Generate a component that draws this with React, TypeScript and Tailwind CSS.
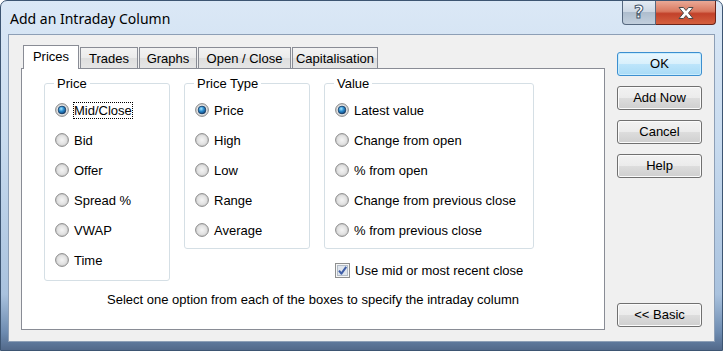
import React from "react";

const Radio = ({ checked }: { checked?: boolean }) => (
  <svg width="14" height="14" viewBox="0 0 14 14" className="shrink-0">
    <defs>
      <radialGradient id="radioBg" cx="50%" cy="50%" r="55%">
        <stop offset="0%" stopColor="#f4f4f4" />
        <stop offset="60%" stopColor="#e2e2e2" />
        <stop offset="100%" stopColor="#c4c4c4" />
      </radialGradient>
      <radialGradient id="radioDot" cx="40%" cy="35%" r="70%">
        <stop offset="0%" stopColor="#a6e6ff" />
        <stop offset="45%" stopColor="#2d8dd0" />
        <stop offset="100%" stopColor="#0b3c72" />
      </radialGradient>
    </defs>
    <circle cx="7" cy="7" r="6.4" fill="url(#radioBg)" stroke="#8c8c8c" strokeWidth="1" />
    {checked && (
      <>
        <circle cx="7" cy="7" r="4.6" fill="#ffffff" />
        <circle cx="7" cy="7" r="3.9" fill="url(#radioDot)" stroke="#1d3a5c" strokeWidth="0.8" />
      </>
    )}
  </svg>
);

const Option = ({ label, checked, focus }: { label: string; checked?: boolean; focus?: boolean }) => (
  <div className="flex h-[30px] items-center gap-[5px]">
    <Radio checked={checked} />
    <span className={focus ? "leading-[15px] outline-1 outline-dotted outline-black" : "leading-[15px]"}>{label}</span>
  </div>
);

const Group = ({ title, options, className }: { title: string; options: string[]; className: string }) => (
  <fieldset className={`rounded-[3px] border border-[#d5dfe5] ${className}`}>
    <legend className="ml-[9px] px-[3px] leading-[15px]">{title}</legend>
    <div className="mt-[4px] flex flex-col pl-[10px]">
      {options.map((o, i) => (
        <Option key={o} label={o} checked={i === 0} focus={o === "Mid/Close"} />
      ))}
    </div>
  </fieldset>
);

const Btn = ({ children, primary }: { children: React.ReactNode; primary?: boolean }) => (
  <button
    className={
      primary
        ? "h-[24px] w-[85px] rounded-[3px] border border-[#3c8fd0] bg-[linear-gradient(to_bottom,#eaf7fe_0%,#d8f0fc_50%,#bde5fb_50%,#a9dbf6_100%)] text-[13px] text-black shadow-[inset_0_0_0_1px_#c8ecfd]"
        : "h-[24px] w-[85px] rounded-[3px] border border-[#707070] bg-[linear-gradient(to_bottom,#f2f2f2_0%,#ebebeb_50%,#dddddd_50%,#cfcfcf_100%)] text-[13px] text-black shadow-[inset_0_0_0_1px_#fbfbfb]"
    }
  >
    {children}
  </button>
);

const tabs = [
  { label: "Prices", cls: "w-[56px]" },
  { label: "Trades", cls: "w-[58px]" },
  { label: "Graphs", cls: "w-[58px]" },
  { label: "Open / Close", cls: "w-[93px]" },
  { label: "Capitalisation", cls: "w-[86px]" },
];

export default function App() {
  return (
    <div className="relative flex h-[351px] w-[723px] flex-col overflow-hidden rounded-t-[7px] border border-[#3d5572] bg-[linear-gradient(to_bottom,#dbe8f6_0%,#c8dbef_40%,#a9c2de_84%,#6d8bb0_95%,#52698a_100%)] font-['Liberation_Sans',Arial,sans-serif] text-[13px] text-black">
      {/* title bar */}
      <div className="flex h-[33px] items-start justify-between pl-[9px] pr-[6px]">
        <span className="mt-[8px] font-['Noto_Sans',sans-serif] text-[14px] leading-[20px] text-black">
          Add an Intraday Column
        </span>
        <div className="flex">
          <div className="flex h-[24px] w-[34px] items-center justify-center rounded-bl-[4px] border border-t-0 border-[#56687f] bg-[linear-gradient(to_bottom,#e4ebf3_0%,#cbd6e3_50%,#aebdce_50%,#c2cfdd_100%)] font-['DejaVu_Sans',sans-serif] text-[17px] font-bold text-white [-webkit-text-stroke:1px_#45566b]">
            ?
          </div>
          <div className="flex h-[24px] w-[60px] items-center justify-center rounded-br-[4px] border border-l-0 border-t-0 border-[#6b2419] bg-[linear-gradient(to_bottom,#eaa996_0%,#d9785f_45%,#c2412a_55%,#d4603f_100%)]">
            <svg width="18" height="14" viewBox="0 0 18 14">
              <path
                d="M2 1.5 H6.5 L9 4.5 L11.5 1.5 H16 L11.5 7 L16 12.5 H11.5 L9 9.5 L6.5 12.5 H2 L6.5 7 Z"
                fill="#ffffff"
                stroke="#4a4a4a"
                strokeWidth="1"
                strokeLinejoin="round"
              />
            </svg>
          </div>
        </div>
      </div>

      {/* client area */}
      <div className="mx-[7px] flex h-[308px] border border-[#8d9fb6] bg-[#f0f0f0] pl-[12px]">
        <div className="flex flex-col pt-[10px]">
          <div className="flex h-[23px] items-end gap-px pl-[2px]">
            {tabs.map((t, i) =>
              i === 0 ? (
                <div
                  key={t.label}
                  className={`relative z-10 -mb-px flex h-[24px] items-start justify-center border border-b-0 border-[#898c95] bg-white pt-[3px] leading-[15px] ${t.cls}`}
                >
                  {t.label}
                </div>
              ) : (
                <div
                  key={t.label}
                  className={`flex h-[21px] items-center justify-center border border-b-0 border-[#898c95] bg-[linear-gradient(to_bottom,#f3f3f3_0%,#ebebeb_50%,#dedede_50%,#e6e6e6_100%)] leading-[15px] ${t.cls}`}
                >
                  {t.label}
                </div>
              )
            )}
          </div>
          <div className="flex h-[262px] w-[584px] flex-col border border-[#898c95] bg-white pl-[22px] pt-[7px]">
            <div className="flex items-start gap-[14px]">
              <Group
                title="Price"
                className="h-[205px] w-[126px]"
                options={["Mid/Close", "Bid", "Offer", "Spread %", "VWAP", "Time"]}
              />
              <Group
                title="Price Type"
                className="h-[173px] w-[126px]"
                options={["Price", "High", "Low", "Range", "Average"]}
              />
              <div className="flex flex-col">
                <Group
                  title="Value"
                  className="h-[173px] w-[210px]"
                  options={["Latest value", "Change from open", "% from open", "Change from previous close", "% from previous close"]}
                />
                <div className="mt-[13px] flex h-[16px] items-center gap-[5px] pl-[11px]">
                  <svg width="15" height="15" viewBox="0 0 15 15" className="shrink-0">
                    <rect x="0.5" y="0.5" width="14" height="14" fill="#f6f6f6" stroke="#8e8f8f" />
                    <rect x="2.5" y="2.5" width="10" height="10" fill="#dfe5ed" stroke="#b3bcc7" />
                    <path d="M4 7.6 L6.4 10.6 L11.2 3.8" fill="none" stroke="#3f5ea8" strokeWidth="2" strokeLinejoin="round" />
                  </svg>
                  <span className="leading-[15px]">Use mid or most recent close</span>
                </div>
              </div>
            </div>
            <div className="mt-[11px] pr-[22px] text-center leading-[15px]">
              Select one option from each of the boxes to specify the intraday column
            </div>
          </div>
        </div>

        <div className="ml-[12px] flex flex-col gap-[10px] pb-[14px] pt-[17px]">
          <Btn primary>OK</Btn>
          <Btn>Add Now</Btn>
          <Btn>Cancel</Btn>
          <Btn>Help</Btn>
          <div className="mt-auto">
            <Btn>&lt;&lt; Basic</Btn>
          </div>
        </div>
      </div>
    </div>
  );
}
